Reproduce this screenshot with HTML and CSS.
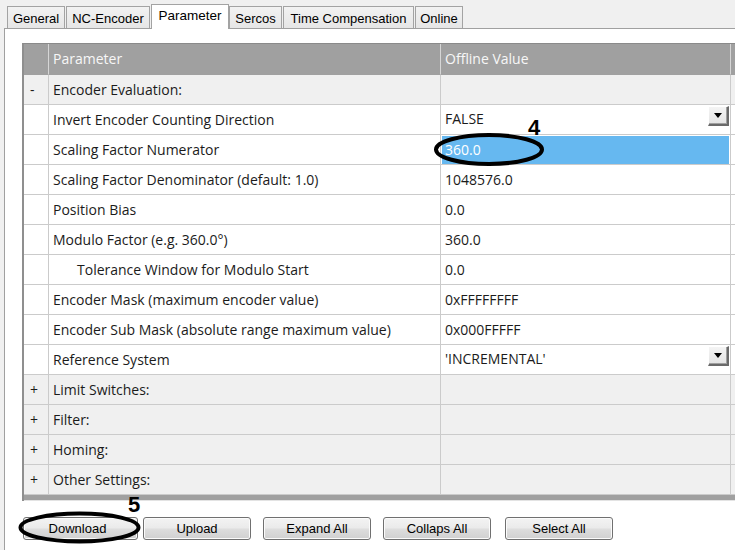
FILE: index.html
```html
<!DOCTYPE html>
<html>
<head>
<meta charset="utf-8">
<link rel="stylesheet" href="styles.css">
</head>
<body>
<div class="tabs">
  <div class="tab t-general">General</div>
  <div class="tab t-nc">NC-Encoder</div>
  <div class="tab tab-active t-param">Parameter</div>
  <div class="tab t-sercos">Sercos</div>
  <div class="tab t-time">Time Compensation</div>
  <div class="tab t-online">Online</div>
</div>
<div class="panel">
  <div class="grid">
    <div class="row head">
      <div class="cell c1"></div>
      <div class="cell">Parameter</div>
      <div class="cell">Offline Value</div>
      <div class="cell"></div>
    </div>
    <div class="row group">
      <div class="cell c1">-</div>
      <div class="cell">Encoder Evaluation:</div>
      <div class="cell"></div>
      <div class="cell"></div>
    </div>
    <div class="row">
      <div class="cell c1"></div>
      <div class="cell">Invert Encoder Counting Direction</div>
      <div class="cell val drop"><span>FALSE</span><span class="ddbtn"><span class="tri"></span></span></div>
      <div class="cell"></div>
    </div>
    <div class="row">
      <div class="cell c1"></div>
      <div class="cell">Scaling Factor Numerator</div>
      <div class="cell val sel">360.0</div>
      <div class="cell"></div>
    </div>
    <div class="row">
      <div class="cell c1"></div>
      <div class="cell">Scaling Factor Denominator (default: 1.0)</div>
      <div class="cell val">1048576.0</div>
      <div class="cell"></div>
    </div>
    <div class="row">
      <div class="cell c1"></div>
      <div class="cell">Position Bias</div>
      <div class="cell val">0.0</div>
      <div class="cell"></div>
    </div>
    <div class="row">
      <div class="cell c1"></div>
      <div class="cell">Modulo Factor (e.g. 360.0°)</div>
      <div class="cell val">360.0</div>
      <div class="cell"></div>
    </div>
    <div class="row">
      <div class="cell c1"></div>
      <div class="cell indent">Tolerance Window for Modulo Start</div>
      <div class="cell val">0.0</div>
      <div class="cell"></div>
    </div>
    <div class="row">
      <div class="cell c1"></div>
      <div class="cell">Encoder Mask (maximum encoder value)</div>
      <div class="cell val">0xFFFFFFFF</div>
      <div class="cell"></div>
    </div>
    <div class="row">
      <div class="cell c1"></div>
      <div class="cell">Encoder Sub Mask (absolute range maximum value)</div>
      <div class="cell val">0x000FFFFF</div>
      <div class="cell"></div>
    </div>
    <div class="row">
      <div class="cell c1"></div>
      <div class="cell">Reference System</div>
      <div class="cell val drop"><span>'INCREMENTAL'</span><span class="ddbtn"><span class="tri"></span></span></div>
      <div class="cell"></div>
    </div>
    <div class="row group">
      <div class="cell c1">+</div>
      <div class="cell">Limit Switches:</div>
      <div class="cell"></div>
      <div class="cell"></div>
    </div>
    <div class="row group">
      <div class="cell c1">+</div>
      <div class="cell">Filter:</div>
      <div class="cell"></div>
      <div class="cell"></div>
    </div>
    <div class="row group">
      <div class="cell c1">+</div>
      <div class="cell">Homing:</div>
      <div class="cell"></div>
      <div class="cell"></div>
    </div>
    <div class="row group">
      <div class="cell c1">+</div>
      <div class="cell">Other Settings:</div>
      <div class="cell"></div>
      <div class="cell"></div>
    </div>
    <div class="hbar"></div>
  </div>
  <div class="buttons">
    <button class="btn b-download">Download</button>
    <button class="btn b-upload">Upload</button>
    <button class="btn b-expand">Expand All</button>
    <button class="btn b-collaps">Collaps All</button>
    <button class="btn b-select">Select All</button>
  </div>
</div>
<svg class="marks" width="735" height="550" viewBox="0 0 735 550">
  <ellipse cx="489" cy="149.5" rx="53" ry="14.5" fill="none" stroke="#000" stroke-width="4"/>
  <ellipse cx="79.5" cy="527.5" rx="59" ry="14" fill="none" stroke="#000" stroke-width="4"/>
  <text x="528" y="135" class="num">4</text>
  <text x="128" y="512" class="num">5</text>
</svg>
</body>
</html>
```
FILE: styles.css
```css
html, body {
  margin: 0;
  padding: 0;
}
body {
  background: #f0f0f0;
  width: 735px;
  height: 550px;
  overflow: hidden;
  position: relative;
  font-family: "Liberation Sans", Arial, sans-serif;
}
.tabs {
  display: flex;
  align-items: flex-end;
  height: 28px;
  padding-left: 7px;
  position: relative;
  z-index: 2;
}
.tab {
  box-sizing: border-box;
  height: 22px;
  margin-right: 1px;
  border: 1px solid #a3a3a3;
  border-bottom: none;
  background: linear-gradient(#f2f2f2, #e6e6e6);
  font-size: 13px;
  color: #000;
  display: flex;
  align-items: center;
  justify-content: center;
  padding-top: 1px;
}
.tab-active {
  height: 25px;
  margin-bottom: -1px;
  margin-right: 0;
  background: #fff;
  padding-top: 0;
  padding-bottom: 4px;
  font-size: 13.5px;
}
.t-general { width: 58px; }
.t-nc { width: 84px; }
.t-param { width: 78px; }
.t-sercos { width: 53px; }
.t-time { width: 131px; }
.t-online { width: 48px; }
.panel {
  box-sizing: border-box;
  margin-left: 4px;
  width: 731px;
  height: 522px;
  overflow: hidden;
  border-left: 1px solid #a0a0a0;
  border-top: 1px solid #a0a0a0;
  background: #fff;
  padding: 14px 0 0 17px;
}
.grid {
  border-left: 2px solid #8f8f8f;
  border-top: 1px solid #8a8a8a;
  font-family: "Open Sans", "Noto Sans", sans-serif;
  font-size: 14px;
  color: #1b1b1b;
}
.row {
  display: grid;
  grid-template-columns: 25px 392px 290px 1fr;
  height: 30px;
}
.cell {
  box-sizing: border-box;
  border-right: 1px solid #cbcbcb;
  border-bottom: 1px solid #cbcbcb;
  display: flex;
  align-items: center;
  padding-left: 4px;
  padding-bottom: 1px;
  white-space: nowrap;
  overflow: hidden;
  background: #fff;
}
.c1 {
  padding-left: 6px;
}
.indent {
  padding-left: 28px;
}
.head {
  height: 31px;
}
.head .cell {
  background: #a0a0a0;
  color: #f7f7f7;
  border-right-color: #d6d6d6;
  border-bottom-color: #a0a0a0;
  padding-bottom: 2px;
}
.group .cell {
  background: #f0f0f0;
}
.val {
  padding-left: 4px;
}
.drop {
  justify-content: space-between;
  align-items: flex-start;
  padding-top: 0;
}
.drop span:first-child {
  line-height: 28px;
}
.ddbtn {
  box-sizing: border-box;
  flex: none;
  width: 21px;
  height: 20px;
  margin-top: 1px;
  margin-right: 1px;
  background: linear-gradient(#f4f4f4, #e4e4e4);
  border-top: 1px solid #ffffff;
  border-left: 1px solid #ffffff;
  border-right: 2px solid #6a6a6a;
  border-bottom: 2px solid #6a6a6a;
  box-shadow: inset -1px -1px 0 #a0a0a0;
  display: flex;
  align-items: center;
  justify-content: center;
}
.tri {
  width: 0;
  height: 0;
  border-left: 4px solid transparent;
  border-right: 4px solid transparent;
  border-top: 5px solid #000;
}
.sel {
  background: #66b8f0;
  color: #fff;
  box-shadow: inset 1px 1px 0 #fff, inset -1px 0 0 #fff;
}
.hbar {
  height: 5px;
  background: #a0a0a0;
  border-bottom: 1px solid #e3e3e3;
}
.buttons {
  display: flex;
  margin-top: 16px;
  padding-left: 1px;
}
.btn {
  box-sizing: border-box;
  flex: none;
  height: 23px;
  width: 108px;
  border: 1px solid #707070;
  border-radius: 3px;
  background: linear-gradient(#f3f3f3 0%, #ebebeb 45%, #dddddd 55%, #d0d0d0 100%);
  box-shadow: inset 0 0 0 1px #fbfbfb;
  font-family: "Liberation Sans", Arial, sans-serif;
  font-size: 13px;
  color: #000;
  padding: 0;
  margin: 0;
}
.b-download { width: 115px; margin-right: 5px; padding-right: 6px; }
.b-upload { margin-right: 12px; }
.b-expand { margin-right: 12px; }
.b-collaps { margin-right: 14px; }
.marks {
  position: absolute;
  top: 0;
  left: 0;
  pointer-events: none;
  z-index: 5;
}
.num {
  font-family: "Liberation Sans", Arial, sans-serif;
  font-weight: bold;
  font-size: 22px;
  fill: #000;
}
```
